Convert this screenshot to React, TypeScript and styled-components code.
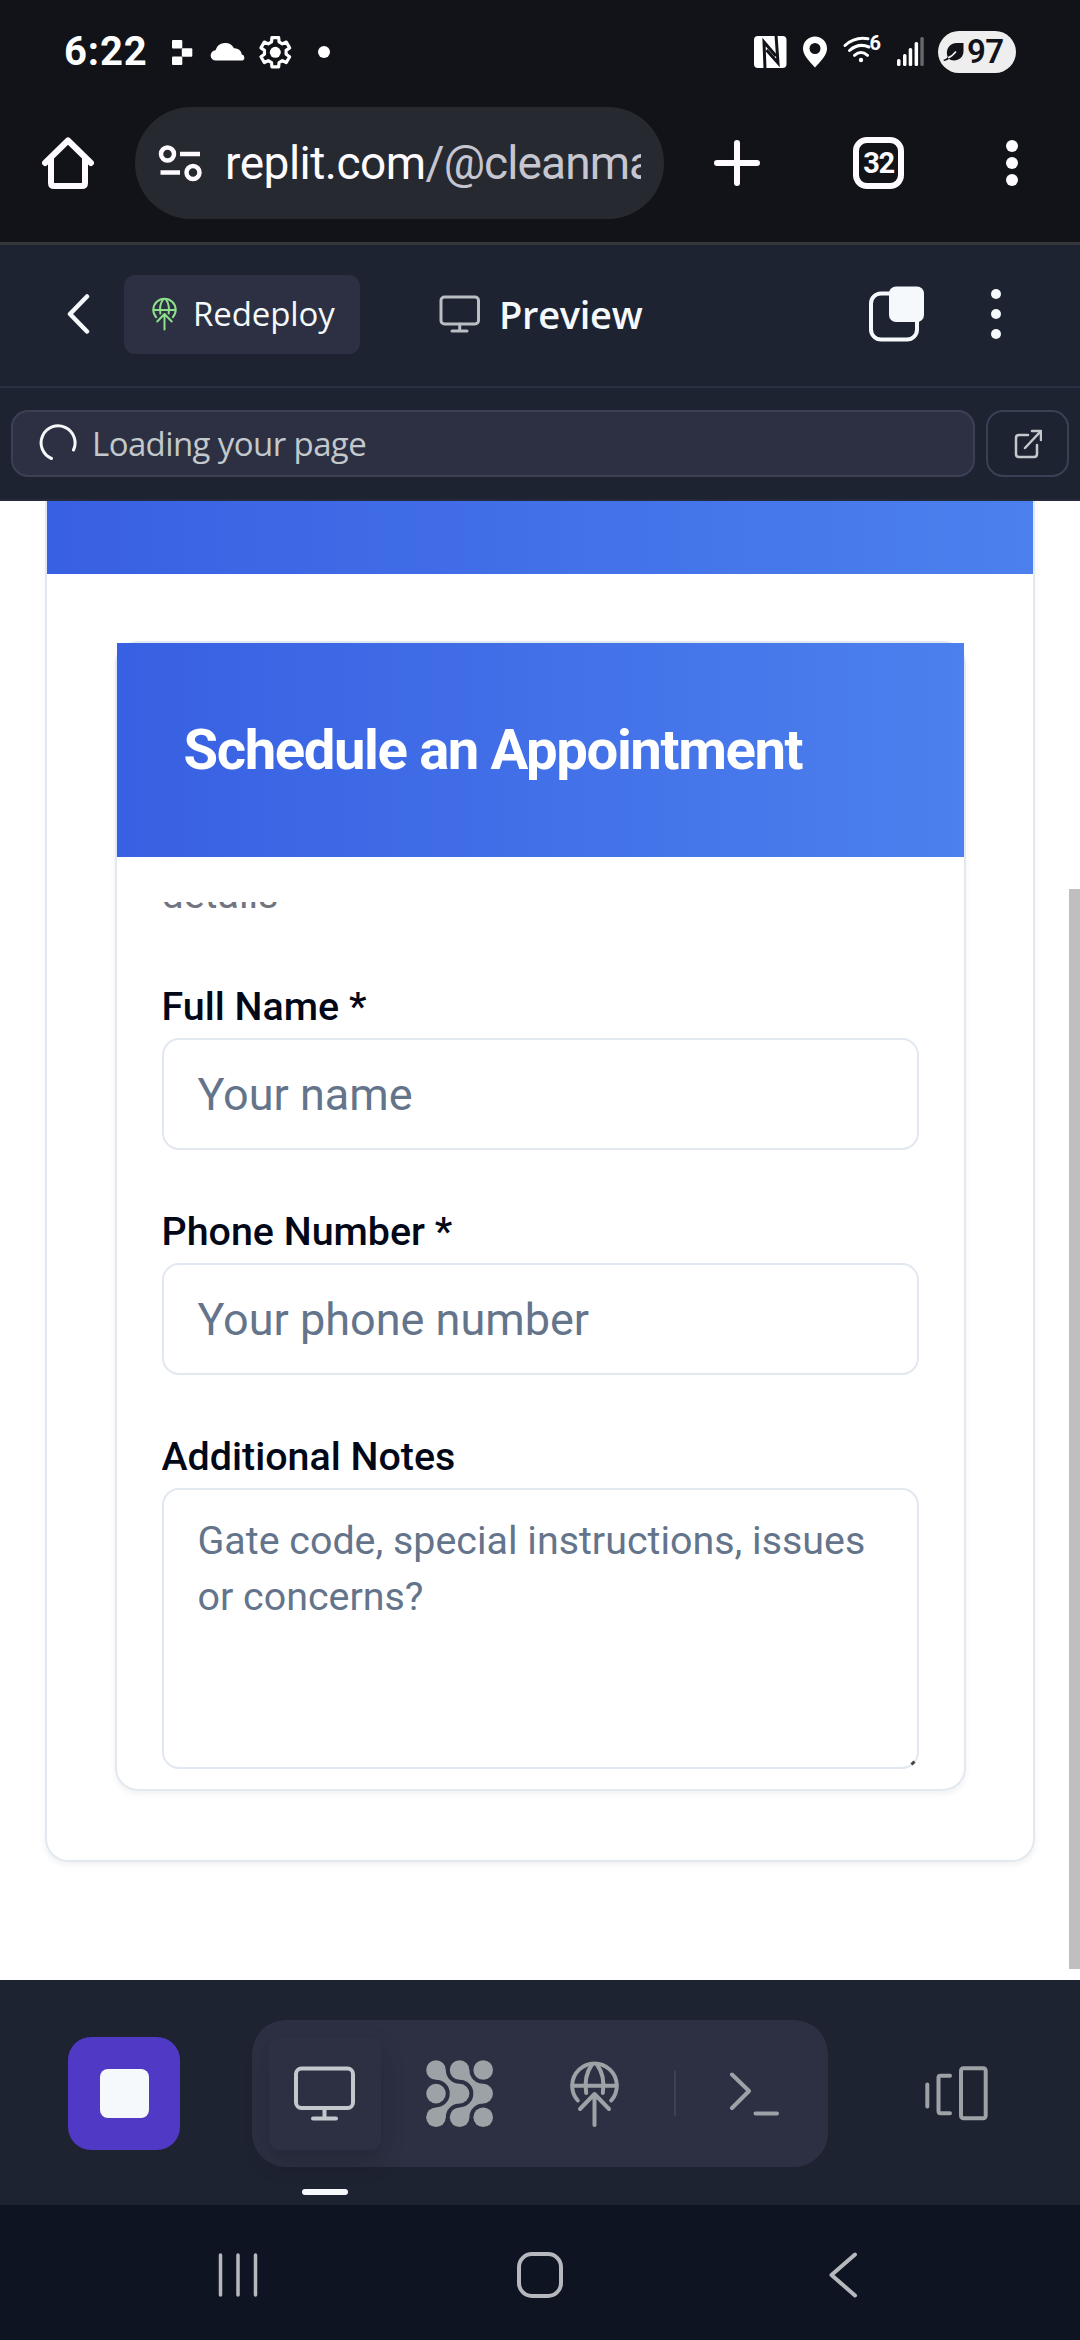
import React from "react";
import styled, { createGlobalStyle } from "styled-components";

const GlobalStyle = createGlobalStyle`
  * { box-sizing: border-box; }
  html, body { margin: 0; padding: 0; }
  body { width: 1080px; height: 2340px; overflow: hidden; background: #fff; font-family: Roboto, "Noto Sans", sans-serif; }
  button { border: 0; padding: 0; margin: 0; background: none; font: inherit; color: inherit; }
  svg { display: block; flex: none; }
`;

const Screen = styled.div`
  width: 1080px;
  height: 2340px;
  display: flex;
  flex-direction: column;
`;

const StatusBar = styled.div`
  height: 104px;
  flex: none;
  display: flex;
  justify-content: space-between;
  align-items: center;
  padding: 0 64px;
  background: #121318;
  color: #fff;
`;

const StatusGroup = styled.div`
  display: flex;
  align-items: center;
`;

const Clock = styled.span`
  font: 700 40px/48px Roboto, sans-serif;
  letter-spacing: 0.9px;
  width: 88px;
`;

const Battery = styled.div`
  width: 78px;
  height: 42px;
  margin-left: 14px;
  border-radius: 21px;
  background: #eee;
  color: #121318;
  display: flex;
  align-items: center;
  padding-left: 5px;
  gap: 3px;
  font: 600 33px/42px Roboto, sans-serif;
  letter-spacing: -0.5px;
`;

const BrowserBar = styled.div`
  height: 141px;
  flex: none;
  display: flex;
  align-items: center;
  background: #121318;
  border-bottom: 3px solid #35363c;
  padding: 3px 0 23px 42px;
  color: #fdfbff;
`;

const Omnibox = styled.div`
  width: 529px;
  height: 112px;
  flex: none;
  margin: 0 50px 0 41px;
  border-radius: 56px;
  background: #272931;
  display: flex;
  align-items: center;
  padding: 0 23px 0 23px;
  gap: 23px;
`;

const Url = styled.div`
  flex: 1;
  overflow: hidden;
  white-space: nowrap;
  font: 400 46px/60px Roboto, sans-serif;
  letter-spacing: -0.5px;
  color: #fdfbff;
`;

const UrlPath = styled.span`
  color: #c5c6d0;
  letter-spacing: -0.9px;
`;

const TabCount = styled.div`
  width: 51px;
  height: 52px;
  flex: none;
  margin: 0 102px 0 93px;
  border: 6px solid #fdfbff;
  border-radius: 14px;
  display: flex;
  align-items: center;
  justify-content: center;
  font: 700 29px/40px Roboto, sans-serif;
  letter-spacing: -1.5px;
`;

const AppHeader = styled.div`
  height: 143px;
  flex: none;
  display: flex;
  align-items: center;
  background: #1e2332;
  border-bottom: 2px solid #2b3144;
  padding: 0 79px 4px 67px;
  color: #f5f9fc;
`;

const Redeploy = styled.button`
  width: 236px;
  height: 79px;
  margin: 2px 79px 0 34px;
  border-radius: 11px;
  background: #2c3042;
  display: flex;
  align-items: center;
  padding: 0 0 2px 28px;
  gap: 16px;
  font: 400 33px/45px "Open Sans", "Noto Sans", sans-serif;
  letter-spacing: -0.1px;
`;

const DeployGlyph = styled.svg`
  color: #8ee08c;
`;

const PaneTitle = styled.div`
  display: flex;
  align-items: center;
  gap: 19px;
  font: 600 38px/50px "Open Sans", "Noto Sans", sans-serif;
  letter-spacing: -0.3px;
`;

const MutedIcon = styled.span`
  color: #b9bec3;
`;

const HeaderActions = styled.div`
  margin-left: auto;
  display: flex;
  align-items: center;
  gap: 67px;
`;

const AddressRow = styled.div`
  height: 113px;
  flex: none;
  display: flex;
  gap: 11px;
  padding: 22px 11px 24px;
  background: #1e2332;
  border-bottom: 2px solid #252b3c;
`;

const Address = styled.div`
  flex: 1;
  height: 67px;
  border: 2px solid #3b4055;
  border-radius: 17px;
  background: #2c3042;
  display: flex;
  align-items: center;
  padding: 0 0 1px 26px;
  gap: 15px;
  color: #c2c8cc;
  font: 400 33px/45px "Open Sans", "Noto Sans", sans-serif;
  letter-spacing: -0.6px;
`;

const Spinner = styled.span`
  color: #f5f9fc;
`;

const OpenButton = styled.button`
  width: 83px;
  height: 67px;
  border: 2px solid #3b4055;
  border-radius: 17px;
  display: flex;
  align-items: center;
  justify-content: center;
  color: #c2c8cc;
`;

const Viewport = styled.div`
  height: 1479px;
  flex: none;
  display: flex;
  justify-content: space-between;
  background: #fff;
`;

const Scrollbar = styled.div`
  width: 11px;
  height: 1080px;
  margin-top: 388px;
  background: #bfbfbf;
`;

const OuterCard = styled.div`
  width: 990px;
  height: 1361px;
  margin-left: 45px;
  border: 2px solid #e2e8f0;
  border-top: 0;
  border-radius: 0 0 23px 23px;
  box-shadow: 0 3px 6px rgba(0, 0, 0, 0.06);
`;

const Banner = styled.div<{ $height: number }>`
  height: ${(p) => p.$height}px;
  display: flex;
  align-items: center;
  padding-left: 67px;
  background: linear-gradient(to right, #3860e2, #4c80ee);
`;

const InnerCard = styled.div`
  width: 851px;
  height: 1150px;
  margin: 67px auto 0;
  border: 2px solid #e2e8f0;
  border-radius: 23px;
  box-shadow: 0 3px 6px rgba(0, 0, 0, 0.06);
`;

const Heading = styled.h2`
  margin: 0;
  color: #fff;
  font: 700 56.25px/56px Roboto, sans-serif;
  letter-spacing: -1.4px;
`;

const FormScroll = styled.div`
  margin: 45px 45px 0;
  height: 868px;
  overflow: hidden;
`;

const Description = styled.p`
  margin: -35px 0 0;
  font: 400 39.4px/56px Roboto, sans-serif;
  color: #71757f;
`;

const Field = styled.div`
  margin-top: 64px;
  & + & { margin-top: 62px; }
`;

const Label = styled.label`
  display: block;
  height: 51px;
  font: 500 39.4px/39px Roboto, sans-serif;
  color: #020817;
`;

const Input = styled.input`
  display: block;
  width: 757px;
  height: 112px;
  padding: 0 34px;
  border: 2px solid #e2e8f0;
  border-radius: 17px;
  font: 400 45px/60px Roboto, sans-serif;
  background: #fff;
  &::placeholder { color: #64748b; opacity: 1; }
`;

const NotesWrap = styled.div`
  position: relative;
  width: 757px;
`;

const TextArea = styled.textarea`
  display: block;
  width: 757px;
  height: 281px;
  padding: 23px 34px;
  border: 2px solid #e2e8f0;
  border-radius: 17px;
  resize: none;
  overflow: hidden;
  font: 400 39.4px/56.25px Roboto, sans-serif;
  background: #fff;
  &::placeholder { color: #64748b; opacity: 1; }
`;

const Grip = styled.svg`
  position: absolute;
  right: 3px;
  bottom: 3px;
`;

const Dock = styled.div`
  height: 225px;
  flex: none;
  display: flex;
  align-items: flex-start;
  background: #1e2332;
  padding: 40px 0 0 68px;
`;

const StopButton = styled.button`
  width: 112px;
  height: 113px;
  margin: 17px 72px 0 0;
  border-radius: 23px;
  background: #4f39c5;
  display: flex;
  align-items: center;
  justify-content: center;
`;

const StopSquare = styled.span`
  width: 49px;
  height: 49px;
  border-radius: 8px;
  background: #f5f9fc;
`;

const Tray = styled.div`
  width: 576px;
  height: 147px;
  border-radius: 34px;
  background: #2c3042;
  display: flex;
  align-items: center;
  gap: 23px;
  padding: 0 17px;
`;

const TrayButton = styled.button<{ $active?: boolean }>`
  position: relative;
  width: 112px;
  height: 113px;
  border-radius: 11px;
  display: flex;
  align-items: center;
  justify-content: center;
  color: ${(p) => (p.$active ? "#c2c8cc" : "#9da2a6")};
  box-shadow: ${(p) => (p.$active ? "0 11px 23px rgba(14, 18, 30, 0.24)" : "none")};
`;

const ActiveMark = styled.span`
  position: absolute;
  left: 33px;
  top: 152px;
  width: 46px;
  height: 6px;
  border-radius: 3px;
  background: #f5f9fc;
`;

const TrayDivider = styled.span`
  width: 2px;
  height: 45px;
  background: #3c4156;
`;

const SwitcherButton = styled.button`
  margin: 40px 0 0 94px;
  color: #9da2a6;
`;

const NavBar = styled.div`
  height: 135px;
  flex: none;
  display: flex;
  align-items: center;
  padding: 5px 0 0 216px;
  background: #0f1422;
  color: #b7b8bd;
`;

const NavButton = styled.button<{ $after?: number }>`
  margin-right: ${(p) => p.$after ?? 0}px;
`;

type IconProps = { w: number; h: number; sw?: number; children: React.ReactNode };

const Icon = ({ w, h, sw = 4, children }: IconProps) => (
  <svg width={w} height={h} viewBox={`0 0 ${w} ${h}`} fill="none" stroke="currentColor" strokeWidth={sw} strokeLinecap="round" strokeLinejoin="round">
    {children}
  </svg>
);

const Dots = ({ w, h, r }: { w: number; h: number; r: number }) => (
  <svg width={w} height={h} viewBox={`0 0 ${w} ${h}`} fill="currentColor">
    {[r, h / 2, h - r].map((y) => <circle key={y} cx={w / 2} cy={y} r={r} />)}
  </svg>
);

const gearPath = (cx: number, cy: number, outer: number, inner: number) => {
  const points: string[] = [];
  for (let k = 0; k < 6; k++) {
    const steps: [number, number][] = [[-20, inner], [-13, outer], [13, outer], [20, inner]];
    steps.forEach(([offset, radius]) => {
      const a = ((60 * k - 90 + offset) * Math.PI) / 180;
      points.push(`${(cx + radius * Math.cos(a)).toFixed(2)} ${(cy + radius * Math.sin(a)).toFixed(2)}`);
    });
  }
  return `M${points.join("L")}Z`;
};

const NotificationIcons = () => (
  <svg width="182" height="40" viewBox="152 32 182 40" fill="#fff">
    <rect x="172" y="40" width="10.300" height="8.500" rx="1" />
    <rect x="181.800" y="48.200" width="10.500" height="8.500" rx="1" />
    <rect x="172" y="56.500" width="10.300" height="8.500" rx="1" />
    <path d="M216 60.500a5 5 0 0 1-.5-10.200A10 10 0 0 1 234 48.300a7.200 7.200 0 0 1 7.800 6.300a3.200 3.200 0 0 1 1 5.900z" />
    <path d={gearPath(275.3, 52.3, 15, 11)} fill="none" stroke="#fff" strokeWidth="3.200" strokeLinejoin="round" />
    <circle cx="275.300" cy="52.300" r="5.500" />
    <circle cx="324" cy="52" r="6" />
  </svg>
);

const SystemIcons = () => (
  <svg width="170" height="42" viewBox="754 31 170 42" fill="#fff">
    <rect x="754" y="36" width="32.500" height="32" rx="4" />
    <path d="M765 69 L764 42 L776 56" fill="none" stroke="#121318" strokeWidth="3" />
    <path d="M776 35 L778 63 L766.500 50" fill="none" stroke="#121318" strokeWidth="3" />
    <path fillRule="evenodd" d="M815 67.500C808 60 803 54.500 803 48.500a12 12 0 0 1 24 0C827 54.500 822 60 815 67.500zM815 43a5.500 5.500 0 1 0 0 11a5.500 5.500 0 0 0 0-11z" />
    <g fill="none" stroke="#fff" strokeWidth="3" strokeLinecap="round">
      <path d="M845 45.500Q855 36.500 868 38.800" />
      <path d="M849.500 50.500Q858.500 42.500 869 47" />
      <path d="M854.500 55.300Q861 49.800 867.500 55.300" />
    </g>
    <circle cx="861" cy="60" r="2.200" />
    <text x="869.500" y="50" fontFamily="Roboto, sans-serif" fontWeight="700" fontSize="20">6</text>
    <rect x="897" y="59" width="3.500" height="7" rx="1.500" />
    <rect x="903" y="54" width="3.500" height="12" rx="1.500" />
    <rect x="908.700" y="48" width="3.500" height="18" rx="1.500" />
    <rect x="914.600" y="42" width="3.500" height="24" rx="1.500" />
    <rect x="920.300" y="37" width="3.500" height="29" rx="1.500" fill="#66676b" />
  </svg>
);

const Leaf = () => (
  <svg width="21" height="20" viewBox="0 0 21 20">
    <path d="M20.500 1V9C20.500 15 16 18.500 11 18.500C8.500 18.500 7 17.800 6 16.800C4.500 18.200 3 18.800 0.800 19L0.500 17.800C2.500 17.200 3.600 16.400 4.600 15C2 7 7 1 14 1Z" fill="#121318" />
    <path d="M5 15.800Q9 14.500 13 9.500" fill="none" stroke="#eee" strokeWidth="1.600" />
  </svg>
);

const DeployShape = () => (
  <>
    <path d="M16.800 40.500A22.300 22.300 0 1 1 50.200 40.500" />
    <path d="M11.500 25.800H55.500" />
    <path d="M25.200 33C23.500 22 25.500 12 31 4.500M41.800 33C43.500 22 41.500 12 36 4.500" />
    <path d="M33.500 65V34M19 49L33.500 34L48 49" />
  </>
);

const AgentGlyph = () => {
  const grid = [10, 33.6, 57.2];
  const bridges = [0, 23.6];
  return (
    <svg width="68" height="68" viewBox="0 0 68 68" fill="currentColor">
      {grid.map((y) => grid.map((x) => <circle key={`${x}-${y}`} cx={x} cy={y} r="9.800" />))}
      {bridges.map((dx) => (
        <g key={dx} transform={`translate(${dx} 0)`}>
          <path d="M10 19.800A13.800 13.800 0 0 1 23.800 33.600L33.600 23.800A13.800 13.800 0 0 1 19.800 10Z" />
          <path d="M10 47.400A13.800 13.800 0 0 0 23.800 33.600L33.600 43.400A13.800 13.800 0 0 0 19.800 57.200Z" />
        </g>
      ))}
    </svg>
  );
};

export default function App() {
  return (
    <Screen>
      <GlobalStyle />
      <StatusBar>
        <StatusGroup>
          <Clock>6:22</Clock>
          <NotificationIcons />
        </StatusGroup>
        <StatusGroup>
          <SystemIcons />
          <Battery><Leaf />97</Battery>
        </StatusGroup>
      </StatusBar>

      <BrowserBar>
        <Icon w={52} h={54} sw={6}>
          <path d="M3 27 L26 4.500 L49 27" />
          <path d="M9 23 V47 Q9 50 12 50 H40 Q43 50 43 47 V23" />
        </Icon>
        <Omnibox>
          <Icon w={44} h={38} sw={4.5}>
            <circle cx="9.500" cy="10" r="6.500" />
            <circle cx="35" cy="28.500" r="6.500" />
            <path d="M22 10 H42 M2.500 28.500 H22" strokeLinecap="butt" />
          </Icon>
          <Url>replit.com<UrlPath>/@cleanmaster</UrlPath></Url>
        </Omnibox>
        <Icon w={46} h={46} sw={6}><path d="M23 3 V43 M3 23 H43" /></Icon>
        <TabCount>32</TabCount>
        <Dots w={12} h={46} r={6} />
      </BrowserBar>

      <AppHeader>
        <Icon w={23} h={40} sw={4.5}><path d="M20 2.500 L3 20 L20 37.500" /></Icon>
        <Redeploy>
          <DeployGlyph width="25" height="34" viewBox="8.500 0 50 68" fill="none" stroke="currentColor" strokeWidth="4" strokeLinecap="round" strokeLinejoin="round">
            <DeployShape />
          </DeployGlyph>
          Redeploy
        </Redeploy>
        <PaneTitle>
          <MutedIcon>
            <Icon w={41} h={38} sw={3}>
              <rect x="2" y="2" width="37.500" height="27" rx="3.500" />
              <path d="M20.700 29 V36 M13 36 H28" />
            </Icon>
          </MutedIcon>
          Preview
        </PaneTitle>
        <HeaderActions>
          <Icon w={55} h={56} sw={4}>
            <rect x="2" y="7.500" width="46" height="46" rx="10" />
            <rect x="20" y="0.500" width="35" height="35.500" rx="7" fill="currentColor" stroke="none" />
          </Icon>
          <Dots w={10} h={50} r={5} />
        </HeaderActions>
      </AppHeader>

      <AddressRow>
        <Address>
          <Spinner>
            <Icon w={38} h={38} sw={3}><path d="M12.500 34.500 A17 17 0 1 1 34.500 26" /></Icon>
          </Spinner>
          Loading your page
        </Address>
        <OpenButton>
          <Icon w={28} h={30} sw={2.5}><path d="M14 6 H5 Q2 6 2 9 V25 Q2 28 5 28 H20 Q23 28 23 25 V16 M11 19 L26.500 2.500 M18 2 H27 V11" /></Icon>
        </OpenButton>
      </AddressRow>

      <Viewport>
        <OuterCard>
          <Banner $height={73} />
          <InnerCard>
            <Banner $height={214}><Heading>Schedule an Appointment</Heading></Banner>
            <FormScroll>
              <Description>details</Description>
              <Field><Label>Full Name *</Label><Input placeholder="Your name" /></Field>
              <Field><Label>Phone Number *</Label><Input placeholder="Your phone number" /></Field>
              <Field>
                <Label>Additional Notes</Label>
                <NotesWrap>
                  <TextArea placeholder="Gate code, special instructions, issues or concerns?" />
                  <Grip width="6" height="6"><path d="M1.500 4.500 L4.500 1.500" stroke="#444" strokeWidth="3" /></Grip>
                </NotesWrap>
              </Field>
            </FormScroll>
          </InnerCard>
        </OuterCard>
        <Scrollbar />
      </Viewport>

      <Dock>
        <StopButton><StopSquare /></StopButton>
        <Tray>
          <TrayButton $active>
            <Icon w={68} h={68}>
              <rect x="5" y="8.500" width="57" height="39.500" rx="5.500" />
              <path d="M33.500 48 V58.500 M22 58.500 H45" />
            </Icon>
            <ActiveMark />
          </TrayButton>
          <TrayButton><AgentGlyph /></TrayButton>
          <TrayButton><Icon w={68} h={68}><DeployShape /></Icon></TrayButton>
          <TrayDivider />
          <TrayButton>
            <Icon w={68} h={68}><path d="M11 14.500L28 31L11 48M34.500 53.500H56" /></Icon>
          </TrayButton>
        </Tray>
        <SwitcherButton>
          <Icon w={68} h={68}>
            <path d="M5.300 24.500V46.500M28 15.700H18.500Q16.500 15.700 16.500 17.700V51Q16.500 53.200 18.500 53.200H28" />
            <rect x="39" y="8.300" width="24.700" height="50" rx="2.500" />
          </Icon>
        </SwitcherButton>
      </Dock>

      <NavBar>
        <NavButton $after={256}>
          <Icon w={44} h={46} sw={3.5}><path d="M4.500 3V43M22 3V43M39.500 3V43" /></Icon>
        </NavButton>
        <NavButton $after={264}>
          <Icon w={48} h={48}><rect x="3" y="3" width="42" height="42" rx="13" /></Icon>
        </NavButton>
        <NavButton>
          <Icon w={30} h={46}><path d="M27 2.500L3.500 23L27 43.500" /></Icon>
        </NavButton>
      </NavBar>
    </Screen>
  );
}
